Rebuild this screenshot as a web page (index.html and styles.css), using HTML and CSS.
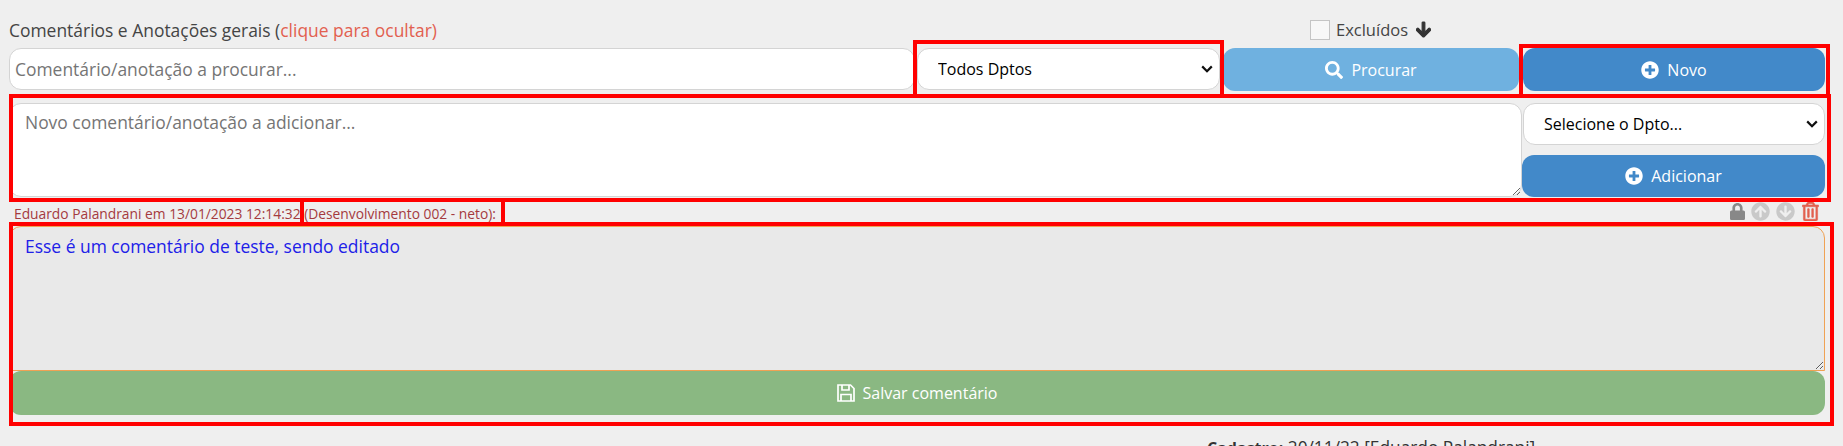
FILE: index.html
```html
<!DOCTYPE html>
<html lang="pt-BR">
<head>
    <meta charset="UTF-8">
    <title>Comentários e Anotações</title>
    <link rel="stylesheet" href="styles.css">
</head>
<body>
    <div id="comments">
        <div class="title-row">
            <div class="title">Comentários e Anotações gerais (<a class="toggle-link">clique para ocultar)</a></div>
            <label class="deleted">
                <input type="checkbox">
                <span>Excluídos</span>
                <svg class="arrow-icon" viewBox="0 0 448 512"><path d="M413.1 222.5l22.2 22.2c9.4 9.4 9.4 24.6 0 33.9L241 473c-9.4 9.4-24.6 9.4-33.9 0L12.7 278.6c-9.4-9.4-9.4-24.6 0-33.9l22.2-22.2c9.5-9.5 25-9.3 34.3.4L184 343.4V56c0-13.3 10.7-24 24-24h32c13.3 0 24 10.7 24 24v287.4l114.8-120.5c9.3-9.8 24.8-10 34.3-.4z"/></svg>
            </label>
        </div>

        <div class="search-row">
            <input class="field search-text" type="text" placeholder="Comentário/anotação a procurar...">
            <select class="field dept search-dept"><option>Todos Dptos</option></select>
            <button class="btn btn-search">
                <svg class="btn-icon" viewBox="0 0 512 512"><path d="M505 442.7L405.3 343c-4.5-4.5-10.6-7-17-7H372c27.6-35.3 44-79.7 44-128C416 93.1 322.9 0 208 0S0 93.1 0 208s93.1 208 208 208c48.3 0 92.7-16.4 128-44v16.3c0 6.4 2.5 12.5 7 17l99.7 99.7c9.4 9.4 24.6 9.4 33.9 0l28.3-28.3c9.4-9.4 9.4-24.6.1-34zM208 336c-70.7 0-128-57.2-128-128 0-70.7 57.2-128 128-128 70.7 0 128 57.2 128 128 0 70.7-57.2 128-128 128z"/></svg>
                Procurar
            </button>
            <button class="btn btn-blue btn-new">
                <svg class="btn-icon" viewBox="0 0 512 512"><path d="M256 8C119 8 8 119 8 256s111 248 248 248 248-111 248-248S393 8 256 8zm144 276c0 6.6-5.4 12-12 12h-92v92c0 6.6-5.4 12-12 12h-56c-6.6 0-12-5.4-12-12v-92h-92c-6.6 0-12-5.4-12-12v-56c0-6.6 5.4-12 12-12h92v-92c0-6.6 5.4-12 12-12h56c6.6 0 12 5.4 12 12v92h92c6.6 0 12 5.4 12 12v56z"/></svg>
                Novo
            </button>
        </div>

        <div class="new-row">
            <textarea class="field new-text" placeholder="Novo comentário/anotação a adicionar..."></textarea>
            <div class="new-side">
                <select class="field dept"><option>Selecione o Dpto...</option></select>
                <button class="btn btn-blue">
                    <svg class="btn-icon" viewBox="0 0 512 512"><path d="M256 8C119 8 8 119 8 256s111 248 248 248 248-111 248-248S393 8 256 8zm144 276c0 6.6-5.4 12-12 12h-92v92c0 6.6-5.4 12-12 12h-56c-6.6 0-12-5.4-12-12v-92h-92c-6.6 0-12-5.4-12-12v-56c0-6.6 5.4-12 12-12h92v-92c0-6.6 5.4-12 12-12h56c6.6 0 12 5.4 12 12v92h92c6.6 0 12 5.4 12 12v56z"/></svg>
                    Adicionar
                </button>
            </div>
        </div>

        <div class="meta-row">
            <span class="meta-text">Eduardo Palandrani em 13/01/2023 12:14:32 (Desenvolvimento 002 - neto):</span>
            <div class="meta-icons">
                <svg class="meta-icon icon-lock" viewBox="0 0 448 512"><path d="M400 224h-24v-72C376 68.2 307.8 0 224 0S72 68.2 72 152v72H48c-26.5 0-48 21.5-48 48v192c0 26.5 21.5 48 48 48h352c26.5 0 48-21.5 48-48V272c0-26.5-21.5-48-48-48zm-104 0H152v-72c0-39.7 32.3-72 72-72s72 32.3 72 72v72z"/></svg>
                <svg class="meta-icon icon-move" viewBox="0 0 512 512"><path d="M8 256C8 119 119 8 256 8s248 111 248 248-111 248-248 248S8 393 8 256zm143.6 28.9l72.4-75.5V392c0 13.3 10.7 24 24 24h16c13.3 0 24-10.7 24-24V209.4l72.4 75.5c9.3 9.7 24.8 9.9 34.3.4l10.9-11c9.4-9.4 9.4-24.6 0-33.9L273 107.7c-9.4-9.4-24.6-9.4-33.9 0L106.3 240.4c-9.4 9.4-9.4 24.6 0 33.9l10.9 11c9.6 9.5 25.1 9.3 34.4-.4z"/></svg>
                <svg class="meta-icon icon-move" viewBox="0 0 512 512"><path d="M504 256c0 137-111 248-248 248S8 393 8 256 119 8 256 8s248 111 248 248zM360.4 227.1L288 302.6V120c0-13.3-10.7-24-24-24h-16c-13.3 0-24 10.7-24 24v182.6l-72.4-75.5c-9.3-9.7-24.8-9.9-34.3-.4l-10.9 11c-9.4 9.4-9.4 24.6 0 33.9L239 404.3c9.4 9.4 24.6 9.4 33.9 0l132.7-132.7c9.4-9.4 9.4-24.6 0-33.9l-10.9-11c-9.5-9.5-25-9.3-34.3.4z"/></svg>
                <svg class="meta-icon icon-trash" viewBox="0 0 448 512"><path d="M268 416h24a12 12 0 0 0 12-12V188a12 12 0 0 0-12-12h-24a12 12 0 0 0-12 12v216a12 12 0 0 0 12 12zM432 80h-82.41l-34-56.7A48 48 0 0 0 274.41 0H173.59a48 48 0 0 0-41.16 23.3L98.41 80H16A16 16 0 0 0 0 96v16a16 16 0 0 0 16 16h16v336a48 48 0 0 0 48 48h288a48 48 0 0 0 48-48V128h16a16 16 0 0 0 16-16V96a16 16 0 0 0-16-16zM171.84 50.91A6 6 0 0 1 177 48h94a6 6 0 0 1 5.15 2.91L293.61 80H154.39zM368 464H80V128h288zm-212-48h24a12 12 0 0 0 12-12V188a12 12 0 0 0-12-12h-24a12 12 0 0 0-12 12v216a12 12 0 0 0 12 12z"/></svg>
            </div>
        </div>

        <div class="editor">
            <textarea class="edit-text">Esse é um comentário de teste, sendo editado</textarea>
            <button class="btn btn-green">
                <svg class="btn-icon save-icon" viewBox="0 0 18 18"><path d="M1 1h12.5L17 4.5V17H1z"/><path d="M5 1v5h7V1"/><path d="M4 17v-6.5h10V17"/></svg>
                Salvar comentário
            </button>
        </div>

        <div class="audit"><b>Cadastro:</b> 20/11/22 [Eduardo Palandrani]</div>
    </div>

    <!-- marcações vermelhas da captura -->
    <div class="mark mark-dept"></div>
    <div class="mark mark-novo"></div>
    <div class="mark mark-new"></div>
    <div class="mark mark-dept-name"></div>
    <div class="mark mark-editor"></div>
</body>
</html>
```

FILE: styles.css
```css
* {
    margin: 0;
    padding: 0;
    box-sizing: border-box;
}

body {
    font-family: 'Open Sans', sans-serif;
    font-size: 16px;
    background-color: #efefef;
    color: #444;
    height: 446px;
    overflow: hidden;
}

#comments {
    width: 1825px;
    padding-left: 9px;
}

.title-row {
    height: 48px;
    padding-top: 11px;
    display: flex;
    align-items: center;
}

.title {
    width: 1301px;
    font-size: 17.45px;
    line-height: 24px;
}

.toggle-link {
    color: #e2604f;
}

.deleted {
    display: flex;
    align-items: center;
    font-size: 16.5px;
}

.deleted input {
    appearance: none;
    width: 20px;
    height: 20px;
    background-color: #f7f7f7;
    border: 1px solid #c4c4c4;
    margin-right: 6px;
}

.arrow-icon {
    width: 15px;
    height: 17px;
    margin-left: 8px;
    fill: #333;
    stroke: #333;
    stroke-width: 36;
}

.search-row {
    display: flex;
    height: 43px;
}

.search-text {
    width: 906px;
    height: 42px;
    padding: 0 5px;
}

.search-dept {
    width: 303px;
    height: 42px;
    margin-left: 2px;
}

.btn-search {
    width: 296px;
    margin-left: 3px;
}

.btn-new {
    width: 302px;
    margin-left: 4px;
}

.field {
    background-color: #fff;
    border: 1px solid #d4d4d4;
    border-radius: 12px;
    font-family: inherit;
    font-size: 17.45px;
    color: #000;
    outline: none;
}

.field::placeholder {
    color: #757575;
}

.dept {
    appearance: none;
    font-size: 16px;
    padding: 0 28px 0 20px;
    background-image: url("data:image/svg+xml,%3Csvg xmlns='http://www.w3.org/2000/svg' viewBox='0 0 12 8'%3E%3Cpath d='M1.2 1.4L6 6.2l4.8-4.8' fill='none' stroke='%23111' stroke-width='2.2'/%3E%3C/svg%3E");
    background-repeat: no-repeat;
    background-position: right 6px center;
    background-size: 12px 8px;
}

.new-row {
    display: flex;
    height: 94px;
    margin-top: 12px;
}

.new-text {
    flex: 1;
    height: 94px;
    padding: 6px 15px;
    resize: vertical;
}

.new-side {
    width: 303px;
    display: flex;
    flex-direction: column;
    justify-content: space-between;
    align-items: flex-end;
}

.new-side select {
    width: 302px;
    height: 42px;
}

.new-side .btn {
    width: 303px;
    height: 42px;
}

.btn {
    display: flex;
    align-items: center;
    justify-content: center;
    gap: 8px;
    border: none;
    border-radius: 12px;
    color: #fff;
    font-family: inherit;
    font-size: 16px;
}

.btn-icon {
    width: 18px;
    height: 18px;
    fill: #fff;
}

.save-icon {
    fill: none;
    stroke: #fff;
    stroke-width: 1.7;
}

.btn-blue {
    background-color: #4289c9;
}

.btn-search {
    background-color: #6fb1e0;
}

.btn-green {
    width: 100%;
    height: 44px;
    background-color: #8ab882;
}

.meta-row {
    height: 29px;
    display: flex;
    align-items: center;
    justify-content: space-between;
    padding: 3px 6px 0 5px;
}

.meta-text {
    font-size: 13.8px;
    color: #a53a3e;
}

.meta-icons {
    display: flex;
    align-items: center;
    margin-top: -3px;
}

.meta-icon {
    height: 19px;
}

.icon-lock {
    width: 15px;
    fill: #888;
    margin-right: 6px;
}

.icon-move {
    width: 19px;
    fill: #c9c9c9;
    margin-right: 6px;
}

.icon-trash {
    width: 17px;
    fill: #e2604f;
    stroke: #e2604f;
    stroke-width: 14;
    margin-left: 1px;
}

.editor {
    display: flex;
    flex-direction: column;
    height: 189px;
}

.edit-text {
    height: 145px;
    padding: 7px 15px;
    background-color: #e9e9e9;
    border: 1px solid #f0a254;
    border-radius: 12px 12px 0 0;
    font-family: inherit;
    font-size: 17.45px;
    color: #2020e8;
    outline: none;
    resize: vertical;
}

.audit {
    margin-top: 21px;
    margin-left: 1198px;
    font-size: 17.3px;
    line-height: 24px;
    color: #333;
}

.audit b {
    font-size: 16px;
}

.mark {
    position: absolute;
    border: 4px solid #f00;
}

.mark-dept {
    left: 913px;
    top: 40px;
    width: 311px;
    height: 58px;
}

.mark-novo {
    left: 1519px;
    top: 44px;
    width: 311px;
    height: 54px;
}

.mark-new {
    left: 9px;
    top: 94px;
    width: 1822px;
    height: 108px;
}

.mark-dept-name {
    left: 300px;
    top: 198px;
    width: 205px;
    height: 28px;
}

.mark-editor {
    left: 9px;
    top: 222px;
    width: 1825px;
    height: 204px;
}
```
